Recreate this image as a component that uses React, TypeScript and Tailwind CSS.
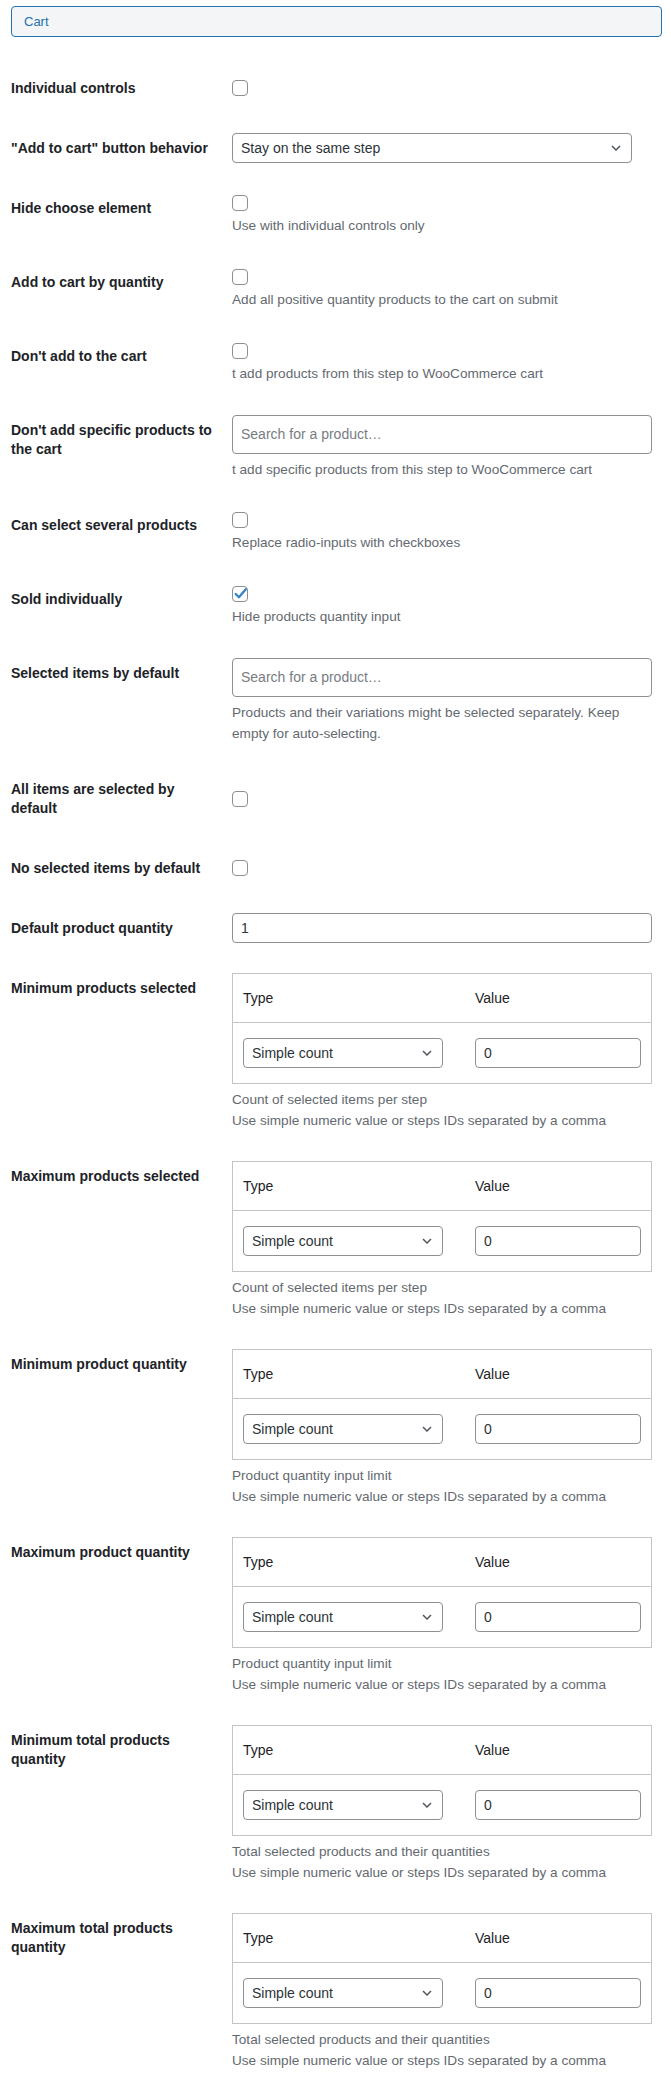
import React from 'react';

const labelCls =
  'w-[221px] shrink-0 pt-5 pb-[21px] pr-[10px] text-[14px] leading-[19px] font-semibold text-[#1d2327]';
const descCls = 'text-[13.6px] leading-[21px] text-[#646970]';

const Checkbox = ({ checked = false }: { checked?: boolean }) => (
  <span className="relative block h-4 w-4 rounded-[4px] border border-[#8c8f94] bg-white">
    {checked && (
      <svg viewBox="0 0 16 16" className="absolute -left-px -top-[2px] h-[17px] w-[17px]">
        <path
          d="M3.5 8.5l3 3 6.5-7.5"
          fill="none"
          stroke="#3582c4"
          strokeWidth="2.2"
          strokeLinecap="round"
          strokeLinejoin="round"
        />
      </svg>
    )}
  </span>
);

const Chevron = () => (
  <svg width="10" height="6" viewBox="0 0 10 6">
    <path d="M1 1l4 4 4-4" fill="none" stroke="#50575e" strokeWidth="1.5" />
  </svg>
);

const Select = ({ value, className = '' }: { value: string; className?: string }) => (
  <div
    className={`flex h-[30px] items-center justify-between rounded-[4px] border border-[#8c8f94] bg-white pl-2 pr-[10px] text-[14px] text-[#2c3338] ${className}`}
  >
    <span>{value}</span>
    <Chevron />
  </div>
);

const TextBox = ({ value }: { value: string }) => (
  <div className="flex h-[30px] items-center rounded-[4px] border border-[#8c8f94] bg-white px-2 text-[14px] text-[#2c3338]">
    {value}
  </div>
);

const SearchBox = () => (
  <div className="flex h-[39px] items-center rounded-[4px] border border-[#8c8f94] bg-white px-2 text-[14px] text-[#787c82]">
    Search for a product…
  </div>
);

const Row = ({
  label,
  center = false,
  children,
}: {
  label: string;
  center?: boolean;
  children: React.ReactNode;
}) => (
  <div className="flex">
    <div className={labelCls}>{label}</div>
    <div className={`flex-1 pr-[10px] pt-[14px] pb-[16px] ${center ? 'flex items-center' : ''}`}>
      {children}
    </div>
  </div>
);

const CheckRow = ({ label, desc, checked = false }: { label: string; desc: string; checked?: boolean }) => (
  <Row label={label}>
    <div className="h-[18px] pt-[2px]">
      <Checkbox checked={checked} />
    </div>
    <p className={`mt-1 pb-px ${descCls}`}>{desc}</p>
  </Row>
);

const LimitTable = () => (
  <div className="border border-[#c3c4c7] text-[14px] text-[#1d2327]">
    <div className="flex border-b border-[#c3c4c7]">
      <div className="w-[232px] px-[10px] py-[15px] leading-[18px]">Type</div>
      <div className="flex-1 px-[10px] py-[15px] leading-[18px]">Value</div>
    </div>
    <div className="flex">
      <div className="w-[232px] px-[10px] py-[15px]">
        <Select value="Simple count" className="w-[200px]" />
      </div>
      <div className="flex-1 px-[10px] py-[15px]">
        <TextBox value="0" />
      </div>
    </div>
  </div>
);

const TableRow = ({ label, desc }: { label: string; desc: string }) => (
  <Row label={label}>
    <LimitTable />
    <p className={`mt-[5px] ${descCls}`}>
      {desc}
      <br />
      Use simple numeric value or steps IDs separated by a comma
    </p>
  </Row>
);

export default function App() {
  return (
    <div className="min-h-screen bg-white pl-[11px] pr-[9px] pt-[6px] [font-family:'Segoe_UI','Liberation_Sans',Arial,sans-serif]">
      <div className="flex h-[31px] items-center rounded-[4px] border border-[#2271b1] bg-[#f3f5f6] pl-3 text-[13px] text-[#2271b1]">
        Cart
      </div>

      <div className="mt-[22px]">
        <Row label="Individual controls" center>
          <Checkbox />
        </Row>

        <Row label={'"Add to cart" button behavior'}>
          <Select value="Stay on the same step" className="w-[400px]" />
        </Row>

        <CheckRow label="Hide choose element" desc="Use with individual controls only" />
        <CheckRow label="Add to cart by quantity" desc="Add all positive quantity products to the cart on submit" />
        <CheckRow label="Don't add to the cart" desc="t add products from this step to WooCommerce cart" />

        <Row label="Don't add specific products to the cart">
          <SearchBox />
          <p className={`mt-[5px] ${descCls}`}>t add specific products from this step to WooCommerce cart</p>
        </Row>

        <CheckRow label="Can select several products" desc="Replace radio-inputs with checkboxes" />
        <CheckRow label="Sold individually" desc="Hide products quantity input" checked />

        <Row label="Selected items by default">
          <SearchBox />
          <p className={`mt-[5px] ${descCls}`}>
            Products and their variations might be selected separately. Keep empty for auto-selecting.
          </p>
        </Row>

        <Row label="All items are selected by default" center>
          <Checkbox />
        </Row>

        <Row label="No selected items by default" center>
          <Checkbox />
        </Row>

        <Row label="Default product quantity">
          <TextBox value="1" />
        </Row>

        <TableRow label="Minimum products selected" desc="Count of selected items per step" />
        <TableRow label="Maximum products selected" desc="Count of selected items per step" />
        <TableRow label="Minimum product quantity" desc="Product quantity input limit" />
        <TableRow label="Maximum product quantity" desc="Product quantity input limit" />
        <TableRow label="Minimum total products quantity" desc="Total selected products and their quantities" />
        <TableRow label="Maximum total products quantity" desc="Total selected products and their quantities" />
      </div>
    </div>
  );
}
